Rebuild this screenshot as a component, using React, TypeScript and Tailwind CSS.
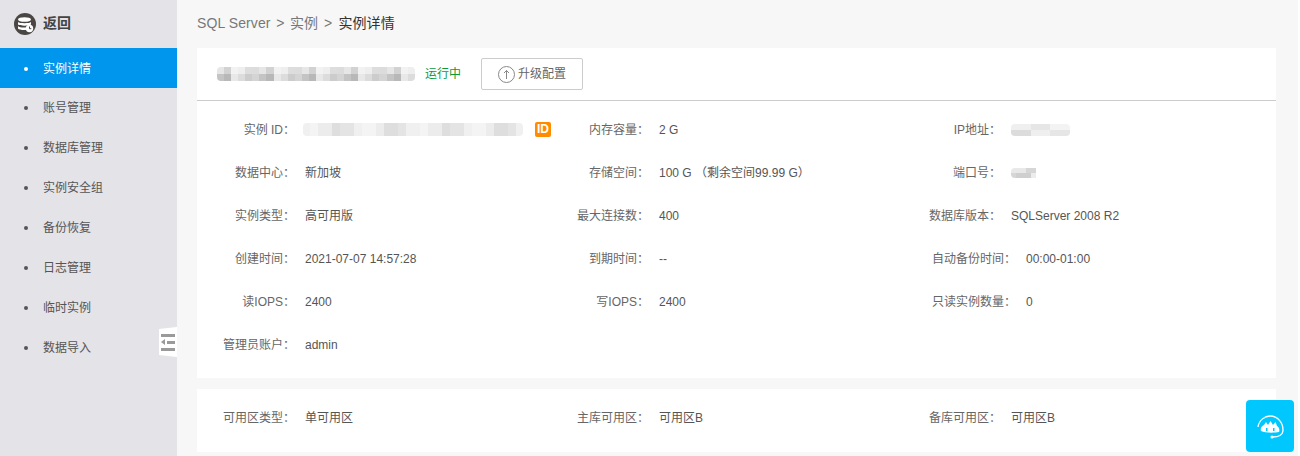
import React from "react";

const menu = ["实例详情", "账号管理", "数据库管理", "实例安全组", "备份恢复", "日志管理", "临时实例", "数据导入"];

function Mosaic({ w, h, colors, cell = 7 }: { w: number; h: number; colors: string[]; cell?: number }) {
  return (
    <div className="flex flex-wrap overflow-hidden blur-[0.5px] rounded-[4px]" style={{ width: w, height: h }}>
      {colors.map((c, i) => (
        <div key={i} style={{ width: cell, height: cell, background: c }} />
      ))}
    </div>
  );
}

const seq = (n: number, base: string[]) => Array.from({ length: n }, (_, i) => base[(i * 7 + (i % 3)) % base.length]);

function Field({ label, long, children }: { label: string; long?: boolean; children: React.ReactNode }) {
  return (
    <div className="flex items-center h-[43px]">
      <div className={`${long ? "w-[113px]" : "w-[98px]"} text-right text-[#666] shrink-0 whitespace-nowrap`}>{label}：</div>
      <div className="ml-[10px] text-[#555] whitespace-nowrap flex items-center">{children}</div>
    </div>
  );
}

export default function App() {
  return (
    <div className="flex w-[1300px] h-[456px] overflow-hidden bg-white text-[12px] font-['Liberation_Sans','Noto_Sans_CJK_SC',sans-serif]">
      <aside className="relative w-[177px] shrink-0 bg-[#e4e3e8]">
        <div className="flex items-center h-[48px] pl-[14px]">
          <svg width="22" height="22" viewBox="0 0 22 22">
            <circle cx="11" cy="11" r="11" fill="#4a4644" />
            <ellipse cx="10.500" cy="6.500" rx="6.500" ry="2.300" fill="#fff" />
            <path d="M4 9c1 1.600 12 1.600 13 0v2.500c-1 1.600-12 1.600-13 0zM4 13c1 1.600 6 1.900 8.500 1.300v2.500c-3 .5-7.500 0-8.500-1.300z" fill="#fff" />
            <circle cx="15.500" cy="15.500" r="3.700" fill="#fff" />
            <path d="M15.500 13.500v2.200h1.800" stroke="#4a4644" strokeWidth="1" fill="none" />
          </svg>
          <span className="ml-[7px] pb-[1px] text-[14px] font-bold text-[#444]">返回</span>
        </div>
        {menu.map((m, i) => (
          <div key={m} className={`flex items-center h-[40px] pl-[24px] ${i === 0 ? "bg-[#0096ed] text-white pt-[1px]" : "text-[#555]"}`}>
            <span className={`w-[4px] h-[4px] rounded-full ${i === 0 ? "bg-white" : "bg-[#555]"}`} />
            <span className="ml-[15px]">{m}</span>
          </div>
        ))}
        <div className="absolute left-[159px] top-[327px] w-[18px] h-[30px] bg-white flex flex-col items-center justify-center gap-[2.500px] [clip-path:polygon(0_2px,100%_0,100%_100%,0_calc(100%-2px))]">
          <div className="w-[14px] h-[3px] bg-[#9a9a9a]" />
          <div className="flex items-center w-[14px]">
            <div className="w-0 h-0 border-y-[3px] border-y-transparent border-r-[4px] border-r-[#9a9a9a]" />
            <div className="flex-1 h-[3px] ml-[2px] bg-[#9a9a9a]" />
          </div>
          <div className="w-[14px] h-[3px] bg-[#9a9a9a]" />
        </div>
      </aside>

      <main className="relative w-[1121px] shrink-0 bg-[#f7f7f7] pl-[20px] pr-[22px]">
        <div className="h-[48px] flex items-center text-[14px] text-[#777] tracking-[0.1px] pb-[2px]">
          <span>SQL Server</span>
          <span className="mx-[5.500px]">&gt;</span>
          <span>实例</span>
          <span className="mx-[6px]">&gt;</span>
          <span className="text-[#333]">实例详情</span>
        </div>

        <section className="bg-white h-[330px]">
          <div className="flex items-center h-[53px] border-b border-[#ccc] pl-[20px]">
            <Mosaic
              w={198}
              h={14}
              cell={7.07}
              colors={[
                ...seq(28, ["#e6e6e6", "#dcdcdc", "#d2d2d2", "#eeeeee", "#f2f2f2", "#dddddd"]),
                ...seq(28, ["#c4c4c4", "#d4d4d4", "#b8b8b8", "#dcdcdc", "#e8e8e8", "#cccccc"]),
              ]}
            />
            <span className="ml-[10px] text-[#0a9a3c]">运行中</span>
            <button className="ml-[20px] w-[102px] h-[32px] border border-[#ccc] rounded-[2px] flex items-center justify-center text-[#666]">
              <svg width="17" height="17" viewBox="0 0 17 17" fill="none" stroke="#888" strokeWidth="1">
                <circle cx="8.500" cy="8.500" r="8" />
                <path d="M8.500 13V4.500M6 7L8.500 4.500L11 7" />
              </svg>
              <span className="ml-[3px]">升级配置</span>
            </button>
          </div>
          <div className="grid grid-cols-[354px_352px_1fr] pt-[7px]">
            <Field label="实例 ID">
              <div className="-ml-[2px]">
                <Mosaic w={220} h={13} cell={7.33} colors={seq(60, ["#f0f0f0", "#ececec", "#e4e4e4", "#f4f4f4", "#dedede"])} />
              </div>
              <span className="ml-[12px] w-[16px] h-[15px] bg-[#ff8c00] rounded-[2px] text-white font-bold text-[12px] leading-[15px] text-center">ID</span>
            </Field>
            <Field label="内存容量">2 G</Field>
            <Field label="IP地址">
              <Mosaic w={59} h={12} cell={6.55} colors={seq(18, ["#efefef", "#e6e6e6", "#f3f3f3", "#dcdcdc"])} />
            </Field>
            <Field label="数据中心">新加坡</Field>
            <Field label="存储空间">100 G （剩余空间99.99 G）</Field>
            <Field label="端口号">
              <Mosaic w={28} h={10} cell={5} colors={seq(12, ["#e8e8e8", "#d6d6d6", "#cfcfcf", "#ececec"])} />
            </Field>
            <Field label="实例类型">高可用版</Field>
            <Field label="最大连接数">400</Field>
            <Field label="数据库版本">SQLServer 2008 R2</Field>
            <Field label="创建时间">2021-07-07 14:57:28</Field>
            <Field label="到期时间">--</Field>
            <Field label="自动备份时间" long>00:00-01:00</Field>
            <Field label="读IOPS">2400</Field>
            <Field label="写IOPS">2400</Field>
            <Field label="只读实例数量" long>0</Field>
            <Field label="管理员账户">admin</Field>
          </div>
        </section>

        <section className="bg-white h-[63px] mt-[11px] pb-[6px] grid grid-cols-[354px_352px_1fr] items-center">
          <Field label="可用区类型">单可用区</Field>
          <Field label="主库可用区">可用区B</Field>
          <Field label="备库可用区">可用区B</Field>
        </section>

        <div className="absolute left-[1069px] top-[400px] w-[48px] h-[52px] rounded-[4px] bg-[#00c8ff]">
          <svg width="48" height="52" viewBox="0 0 48 52" fill="none">
            <path d="M12 27C13 20 19 16 24 16C32 16 37 23 37 30C37 35 32 37 27 37" stroke="#fff" strokeWidth="1.300" />
            <circle cx="26" cy="37" r="1.500" fill="#fff" />
            <path d="M15 31C14 28 16 26 18 25L20 22L22 25L24.500 21L27 25L29.500 22L31 26C33 27 34 30 33 32C28 33 19 33 15 31Z" fill="#fff" />
            <rect x="20" y="28" width="1.500" height="3" fill="#00c8ff" />
            <rect x="27" y="28" width="1.500" height="3" fill="#00c8ff" />
          </svg>
        </div>
      </main>
    </div>
  );
}
